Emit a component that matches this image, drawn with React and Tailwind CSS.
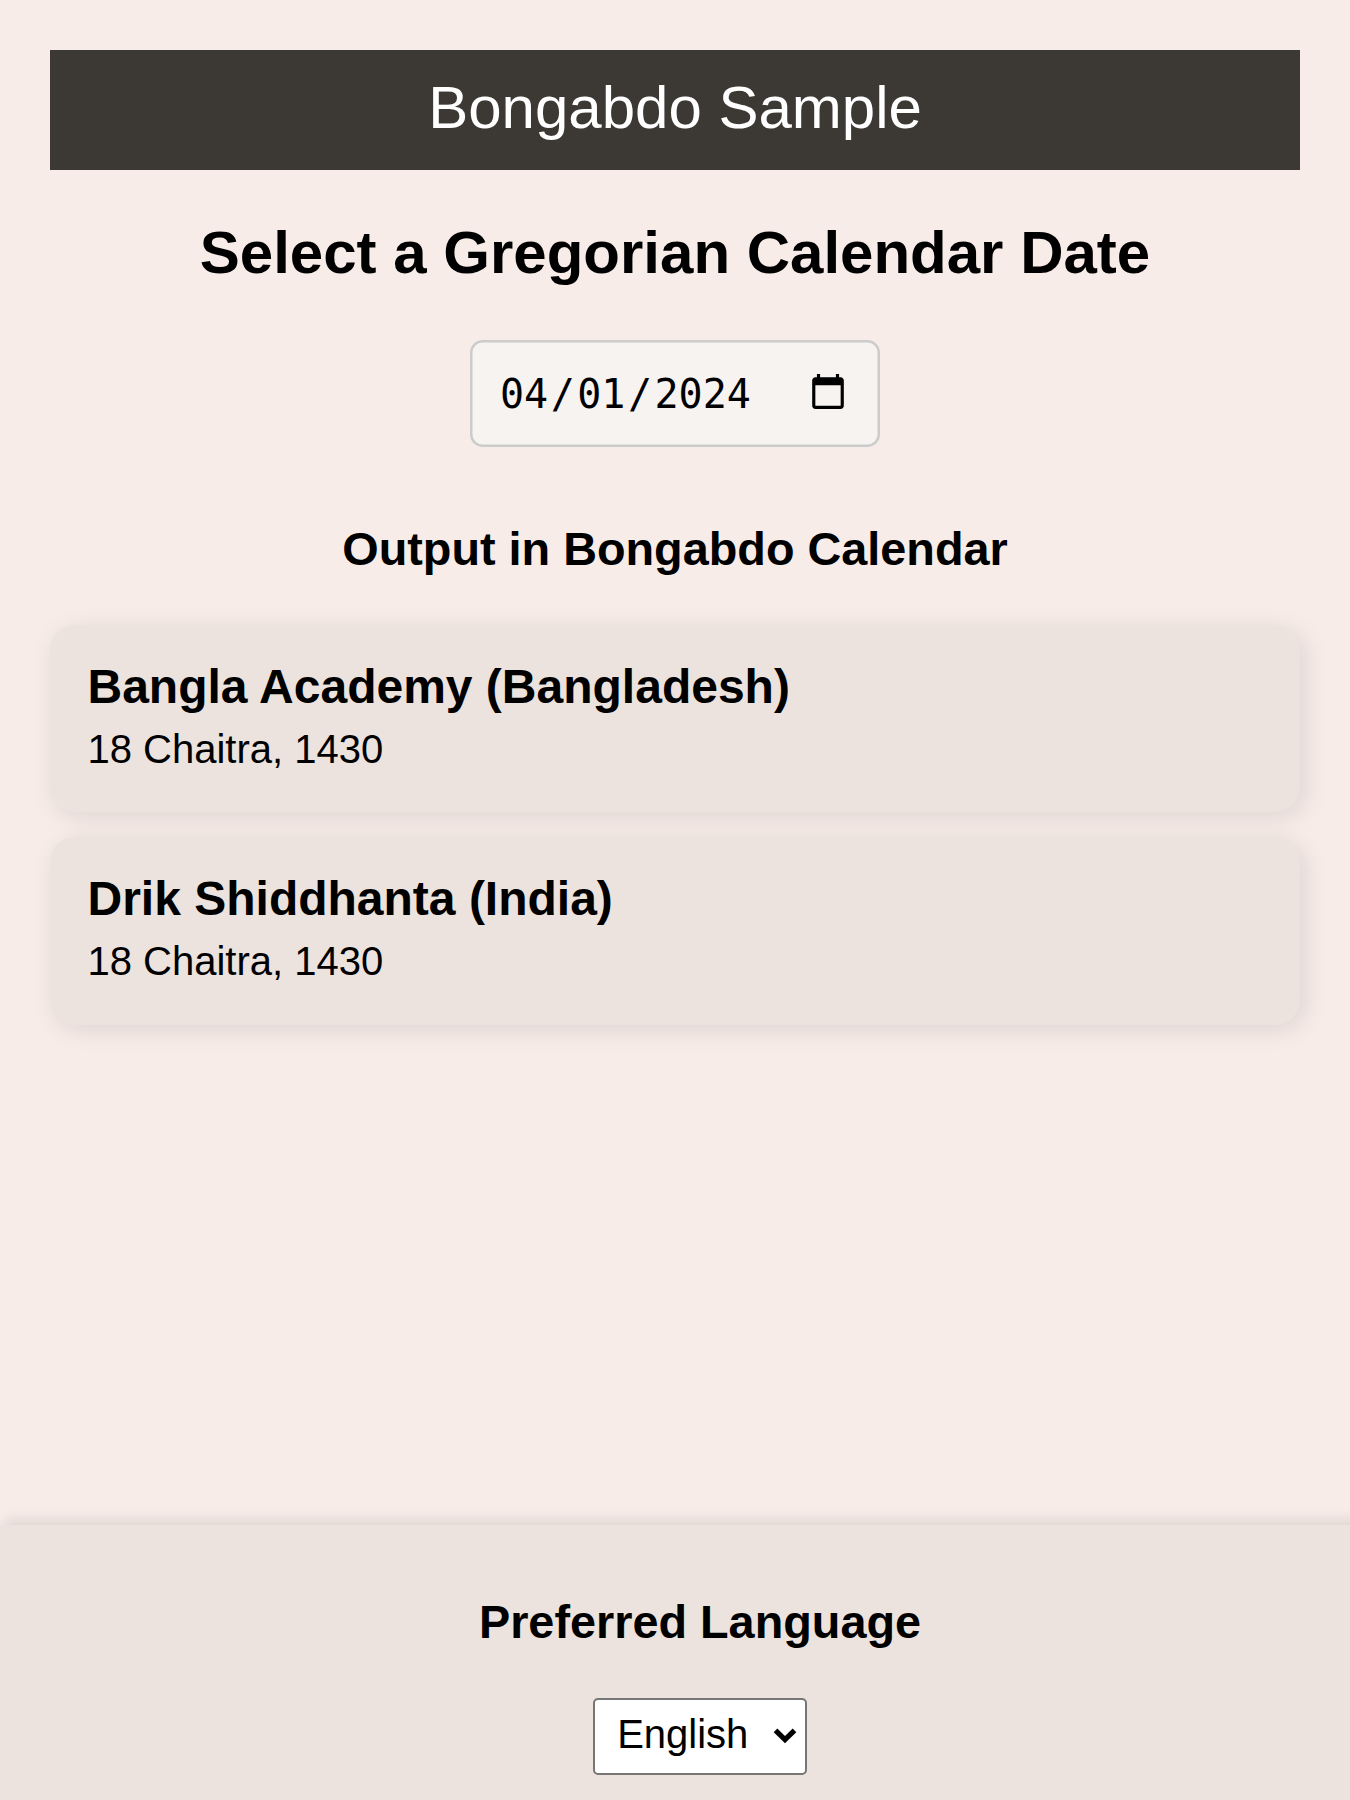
const results = [
  { region: "Bangla Academy (Bangladesh)", date: "18 Chaitra, 1430" },
  { region: "Drik Shiddhanta (India)", date: "18 Chaitra, 1430" },
];

function ResultCard({ region, date }) {
  return (
    <section className="h-[75px] rounded-[10px] bg-[#ece3de] px-[15px] pt-[13.6px] shadow-[2px_2px_10px_rgba(0,0,0,0.1)]">
      <h4 className="text-[19.2px] leading-[22px] font-bold">{region}</h4>
      <p className="mt-[5.2px] leading-[18px]">{date}</p>
    </section>
  );
}

function LanguageSelect() {
  return (
    <div className="relative mt-[19.8px]">
      <select
        defaultValue="English"
        aria-label="Preferred language"
        className="block h-[30.7px] w-[85.9px] appearance-none rounded-[2px] border border-[#767676] bg-white pt-0 pb-[1.8px] pl-[9px] font-['Liberation_Sans',Arial,sans-serif] text-[16px] leading-normal"
      >
        <option>English</option>
      </select>
      <svg
        viewBox="0 0 24 16"
        className="pointer-events-none absolute top-[12px] right-[4.2px] h-[6.4px] w-[9.6px]"
        aria-hidden="true"
      >
        <path d="M2.5 2.4 12 11.6 21.5 2.4" fill="none" stroke="black" strokeWidth="5.2" />
      </svg>
    </div>
  );
}

export default function App() {
  return (
    <div className="flex h-[720px] w-[540px] flex-col overflow-hidden bg-[#f7ece8] font-['Liberation_Sans',Arial,sans-serif] text-[16px] text-black [zoom:2.5]">
      <main className="flex flex-1 flex-col px-5 pt-5">
        <h1 className="h-12 bg-[#3c3833] pt-[9px] text-center text-[24px] leading-[28px] text-white">
          Bongabdo Sample
        </h1>
        <h2 className="mt-[19px] text-center text-[24px] leading-[28px] font-bold">
          Select a Gregorian Calendar Date
        </h2>
        <div className="mt-[21px] flex h-[43px] justify-center">
          <input
            type="date"
            defaultValue="2024-04-01"
            aria-label="Gregorian date"
            className="h-[42.8px] w-[164px] rounded-[5px] bg-[#f7f3f0] py-[11px] pr-[11px] pl-[11px] font-['DejaVu_Sans_Mono',monospace] text-[16px] leading-normal shadow-[inset_0_0_0_1px_#ccc] [&::-webkit-calendar-picker-indicator]:-translate-y-[0.6px]"
          />
        </div>
        <h3 className="mt-[30px] mb-[19.8px] text-center text-[18.72px] leading-[21px] font-bold">
          Output in Bongabdo Calendar
        </h3>
        <div className="flex flex-col gap-[10px]">
          {results.map((result) => (
            <ResultCard key={result.region} {...result} />
          ))}
        </div>
      </main>
      <footer className="flex h-[110px] w-[560px] shrink-0 flex-col items-center bg-[#ece3de] shadow-[2px_-2px_5px_rgba(0,0,0,0.1)]">
        <h3 className="mt-[28.4px] text-[18.72px] leading-[21px] font-bold">Preferred Language</h3>
        <LanguageSelect />
      </footer>
    </div>
  );
}
